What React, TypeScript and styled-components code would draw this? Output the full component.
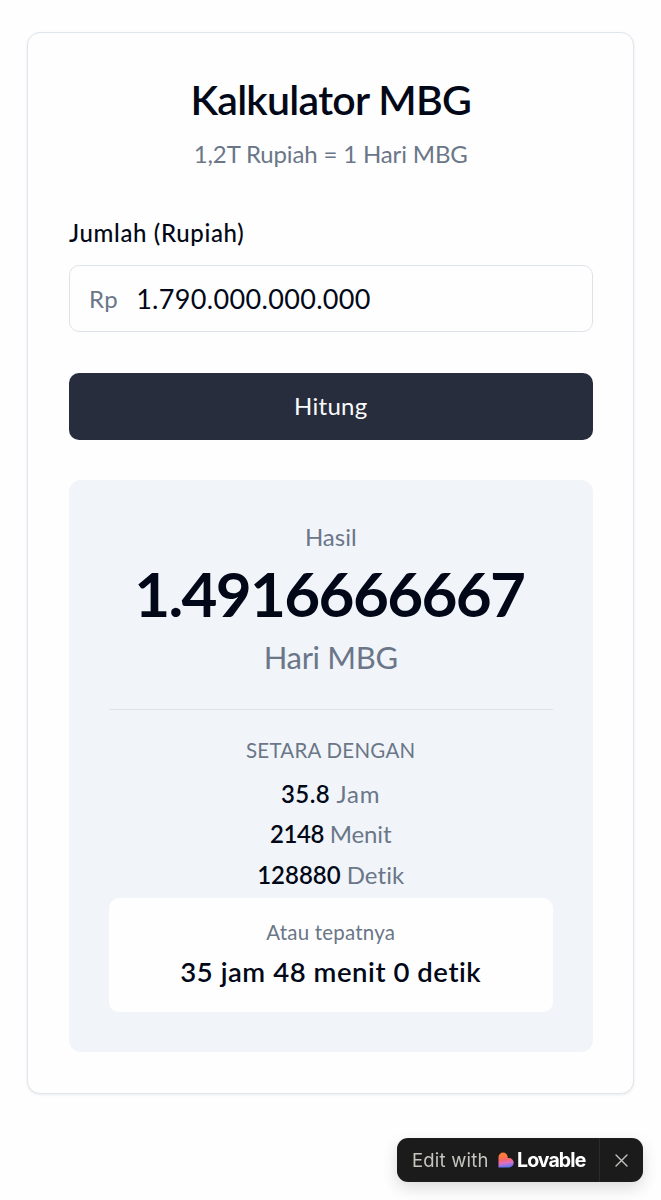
import React, { useState } from "react";
import styled, { createGlobalStyle } from "styled-components";

const GlobalStyle = createGlobalStyle`
  * { box-sizing: border-box; }
  body {
    margin: 0;
    background: #fefefe;
    color: #020817;
    font-family: Lato, "Noto Sans", sans-serif;
  }
`;

const Page = styled.main`
  min-height: 1200px;
  padding: 32px 27px 0;
`;

const Card = styled.section`
  height: 1062px;
  padding: 40px 40.5px 0 41px;
  border: 1px solid #dfe5ee;
  border-radius: 13px;
  background: #fefefe;
  box-shadow: 0 1px 3px rgba(0, 0, 0, 0.08);
`;

interface TextProps {
  $size: number;
  $line: number;
  $weight?: number;
  $tracking?: number;
  $muted?: boolean;
}

const Text = styled.p<TextProps>`
  margin: 0;
  text-align: center;
  white-space: nowrap;
  font-size: ${(p) => p.$size}px;
  line-height: ${(p) => p.$line}px;
  font-weight: ${(p) => p.$weight ?? 400};
  letter-spacing: ${(p) => p.$tracking ?? 0}px;
  color: ${(p) => (p.$muted ? "#6b7688" : "#020817")};
`;

const Total = styled(Text)`
  padding: 1px 3px 0 0;
`;

const Header = styled.header`
  display: flex;
  flex-direction: column;
  gap: 10px;
`;

const Form = styled.form`
  display: flex;
  flex-direction: column;
  margin-top: 50px;
`;

const Label = styled.label`
  font-size: 24px;
  line-height: 24px;
  font-weight: 500;
  letter-spacing: 0.65px;
  margin-bottom: 20px;
`;

const Field = styled.div`
  display: flex;
  align-items: center;
  gap: 18px;
  height: 67px;
  padding: 0 19px;
  border: 1px solid #dee2e9;
  border-radius: 10px;
`;

const Prefix = styled.span`
  color: #6b7688;
  font-size: 24px;
  letter-spacing: 0.4px;
`;

const Amount = styled.input`
  flex: 1;
  min-width: 0;
  padding: 0;
  border: 0;
  outline: 0;
  background: transparent;
  color: #020817;
  font: 400 27px Lato, sans-serif;
  letter-spacing: 0.33px;
`;

const Submit = styled.button`
  height: 67px;
  margin-top: 41px;
  padding: 0 0 2px;
  border: 0;
  border-radius: 10px;
  background: #282d3d;
  color: #f8fafc;
  font: 400 24px Lato, sans-serif;
  letter-spacing: 0.3px;
`;

const Result = styled.section`
  display: flex;
  flex-direction: column;
  height: 572px;
  margin-top: 40px;
  padding: 40px 40px 0;
  border-radius: 12px;
  background: #f1f5fa;
`;

const Main = styled.div`
  height: 189px;
`;

const Equivalents = styled.div`
  border-top: 1px solid #dde3eb;
  padding-top: 27px;
`;

const Rows = styled.div`
  padding-top: 10px;
`;

const Unit = styled.span<{ $tracking: number }>`
  color: #6b7688;
  font-weight: 400;
  letter-spacing: ${(p) => p.$tracking}px;
`;

const Exact = styled.div`
  display: flex;
  flex-direction: column;
  gap: 6px;
  height: 114px;
  margin-top: 3px;
  padding-top: 21px;
  border-radius: 10px;
  background: #fefefe;
`;

const Badge = styled.aside`
  position: fixed;
  right: 18px;
  bottom: 18px;
  display: flex;
  width: 246px;
  height: 44px;
  border-radius: 11px;
  background: #1b1b1b;
  box-shadow: 0 6px 16px rgba(0, 0, 0, 0.14);
  font-family: Inter, sans-serif;
`;

const BadgeLink = styled.div`
  display: flex;
  align-items: center;
  width: 203px;
  padding-left: 15px;
  border-right: 1px solid #2b2b2b;
  white-space: nowrap;
`;

const EditWith = styled.span`
  width: 86px;
  color: #c6c4be;
  font-size: 18.5px;
  letter-spacing: 0.2px;
`;

const Brand = styled.span`
  margin-left: 3px;
  color: #fff;
  font-size: 19.5px;
  font-weight: 700;
  letter-spacing: -0.9px;
`;

const Close = styled.button`
  display: flex;
  flex: 1;
  align-items: center;
  justify-content: center;
  padding: 0;
  border: 0;
  background: transparent;
`;

const Heart = () => (
  <svg width="16" height="16" viewBox="0 0 16 16">
    <defs>
      <linearGradient id="heart" x1="0.35" y1="0" x2="0.5" y2="1">
        <stop offset="0.2" stopColor="#fb7a3c" />
        <stop offset="0.48" stopColor="#f9656b" />
        <stop offset="0.7" stopColor="#dc70c4" />
        <stop offset="1" stopColor="#5874f6" />
      </linearGradient>
    </defs>
    <path
      d="M0.5 5.2A4.6 4.6 0 0 1 9.7 5.2V6H11a4.7 4.7 0 0 1 0 9.4H0.5Z"
      fill="url(#heart)"
    />
  </svg>
);

const equivalents = [
  { value: "35.8", unit: "Jam", tracking: 0.4, unitTracking: 0.9 },
  { value: "2148", unit: "Menit", tracking: -0.4, unitTracking: -0.1 },
  { value: "128880", unit: "Detik", tracking: 0, unitTracking: 0.1 },
];

export default function App() {
  const [amount, setAmount] = useState("1.790.000.000.000");
  return (
    <>
      <GlobalStyle />
      <Page>
        <Card>
          <Header>
            <Text as="h1" $size={41} $line={54} $weight={600} $tracking={-0.7}>
              Kalkulator MBG
            </Text>
            <Text $size={24} $line={34} $tracking={-0.15} $muted>
              1,2T Rupiah = 1 Hari MBG
            </Text>
          </Header>
          <Form onSubmit={(e) => e.preventDefault()}>
            <Label htmlFor="amount">Jumlah (Rupiah)</Label>
            <Field>
              <Prefix>Rp</Prefix>
              <Amount
                id="amount"
                value={amount}
                onChange={(e) => setAmount(e.target.value)}
              />
            </Field>
            <Submit type="submit">Hitung</Submit>
          </Form>
          <Result>
            <Main>
              <Text $size={24} $line={34} $muted>Hasil</Text>
              <Total $size={62} $line={76} $weight={700} $tracking={-1.7}>1.4916666667</Total>
              <Text $size={31} $line={52} $tracking={-0.35} $muted>Hari MBG</Text>
            </Main>
            <Equivalents>
              <Text $size={20.5} $line={27} $tracking={0.25} $muted>SETARA DENGAN</Text>
              <Rows>
                {equivalents.map((row) => (
                  <Text key={row.unit} $size={24} $line={40.4} $weight={600} $tracking={row.tracking}>
                    {row.value} <Unit $tracking={row.unitTracking}>{row.unit}</Unit>
                  </Text>
                ))}
              </Rows>
            </Equivalents>
            <Exact>
              <Text $size={20.5} $line={27} $tracking={0.2} $muted>Atau tepatnya</Text>
              <Text $size={27.5} $line={40} $weight={600} $tracking={0.55}>
                35 jam 48 menit 0 detik
              </Text>
            </Exact>
          </Result>
        </Card>
      </Page>
      <Badge>
        <BadgeLink>
          <EditWith>Edit with</EditWith>
          <Heart />
          <Brand>Lovable</Brand>
        </BadgeLink>
        <Close aria-label="Close">
          <svg width="13" height="13" viewBox="0 0 13 13" stroke="#c6c4be" strokeWidth="1.4" strokeLinecap="round">
            <path d="M1 1 12 12M12 1 1 12" />
          </svg>
        </Close>
      </Badge>
    </>
  );
}
